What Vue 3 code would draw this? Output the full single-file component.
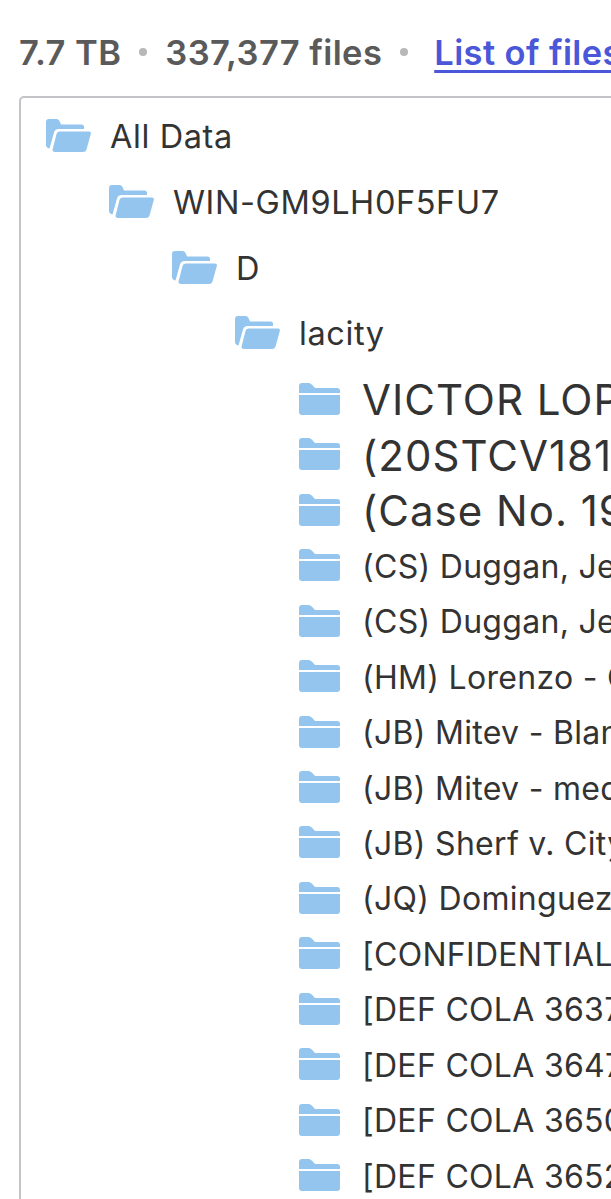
<script setup>
const openRows = [
  { name: 'All Data', level: 'lv0' },
  { name: 'WIN-GM9LH0F5FU7', level: 'lv1' },
  { name: 'D', level: 'lv2' },
  { name: 'lacity', level: 'lv3' }
]
const folders = [
  { name: 'VICTOR LOPEZ', big: true },
  { name: '(20STCV18123)', big: true },
  { name: '(Case No. 19STCV)', big: true },
  { name: '(CS) Duggan, Jeffrey' },
  { name: '(CS) Duggan, Jeffrey' },
  { name: '(HM) Lorenzo - Case' },
  { name: '(JB) Mitev - Blank' },
  { name: '(JB) Mitev - medical' },
  { name: '(JB) Sherf v. City' },
  { name: '(JQ) Dominguez' },
  { name: '[CONFIDENTIAL]' },
  { name: '[DEF COLA 3637]' },
  { name: '[DEF COLA 3647]' },
  { name: '[DEF COLA 3650]' },
  { name: '[DEF COLA 3652]' }
]
</script>

<template>
  <main class="page">
    <header class="stats">
      <span>7.7 TB</span>
      <i class="dot"></i>
      <span>337,377 files</span>
      <i class="dot"></i>
      <a class="link" href="#">List of files</a>
    </header>
    <section class="card">
      <div v-for="row in openRows" :key="row.name" class="row open" :class="row.level">
        <span class="slot">
          <svg class="ico-open" viewBox="0 0 45 33" width="45" height="33" aria-hidden="true">
            <path fill="#93c5ef" d="M3 0H10.5Q12.5 0 13.5 2L15 5.5H35.5Q38 5.5 38 8V10H12.5Q9 10 8 13.5L3.5 29.5Q0 28.5 0 26V3Q0 0 3 0Z"/>
            <path fill="#93c5ef" d="M13.5 12.5H43Q45.5 12.5 44.8 15L40.5 30.5Q39.8 33 37 33H9Q6 33 6.6 30.5L10.5 15Q11 12.5 13.5 12.5Z"/>
          </svg>
        </span>
        <span class="label">{{ row.name }}</span>
      </div>
      <div class="closed-list">
        <div v-for="(f, i) in folders" :key="i" class="row closed">
          <span class="slot">
            <svg viewBox="0 0 41 32" width="41" height="32" aria-hidden="true">
              <path fill="#93c5ef" d="M3 0H9.5Q11.5 0 13 1.8L16 5H38Q41 5 41 8V10H0V3Q0 0 3 0Z"/>
              <path fill="#93c5ef" d="M0 12H41V29Q41 32 38 32H3Q0 32 0 29Z"/>
            </svg>
          </span>
          <span class="label" :class="{ big: f.big }">{{ f.name }}</span>
        </div>
      </div>
    </section>
  </main>
</template>

<style>
html, body { margin: 0; background: #fff; overflow: hidden; }
</style>

<style scoped>
.page {
  width: 611px;
  height: 1199px;
  overflow: hidden;
  background: #fff;
  font-family: Inter, "Noto Sans", sans-serif;
  color: #333;
}
.stats {
  display: flex;
  align-items: center;
  height: 96px;
  padding: 8px 0 0 19px;
  box-sizing: border-box;
  white-space: nowrap;
  font-size: 34.5px;
  font-weight: 600;
  letter-spacing: 0.4px;
  color: #5a5a5a;
}
.dot {
  width: 8px;
  height: 8px;
  border-radius: 50%;
  background: #b8b8b8;
  margin: 0 18px;
  flex: none;
}
.link {
  margin-left: 8px;
  color: #4a57d9;
  text-decoration: underline;
  text-decoration-thickness: 2.5px;
  text-underline-offset: 5px;
}
.card {
  width: 900px;
  height: 1200px;
  margin-left: 19px;
  box-sizing: border-box;
  border: 2px solid #c4c4c8;
  border-radius: 5px;
  padding: 5px 0 0 25px;
}
.row {
  display: flex;
  align-items: center;
  white-space: nowrap;
}
.open { height: 65.67px; }
.closed { height: 55.45px; }
.lv1 { padding-left: 63px; }
.lv2 { padding-left: 126px; }
.lv3 { padding-left: 189px; }
.closed-list {
  padding: 5.6px 0 0 253px;
}
.slot {
  display: flex;
  width: 64px;
  flex: none;
}
.label {
  padding-top: 2px;
  font-size: 32.5px;
  letter-spacing: 0.6px;
}
.closed .label {
  margin-left: -1px;
  font-size: 32px;
  letter-spacing: 0.3px;
}
.closed .label.big {
  font-size: 42px;
  letter-spacing: 1px;
}
</style>
